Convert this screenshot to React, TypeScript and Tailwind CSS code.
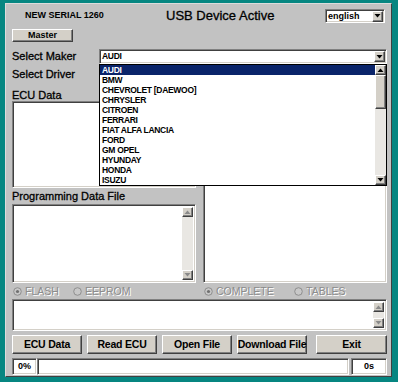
import React from "react";

const sunken =
  "border border-t-[#808080] border-l-[#808080] border-r-white border-b-white shadow-[inset_1px_1px_0_#404040,inset_-1px_-1px_0_#d4d0c8] bg-white";
const raised =
  "border border-t-white border-l-white border-r-[#404040] border-b-[#404040] shadow-[inset_-1px_-1px_0_#808080] bg-[#d4d0c8]";

function Arrow({ up, dim }: { up?: boolean; dim?: boolean }) {
  return (
    <svg width="7" height="4" viewBox="0 0 7 4" className="block">
      {up ? (
        <polygon points="0.5,4 6.5,4 3.5,0.5" fill={dim ? "#8a8a8a" : "#000"} />
      ) : (
        <polygon points="0.5,0 6.5,0 3.5,3.5" fill={dim ? "#8a8a8a" : "#000"} />
      )}
    </svg>
  );
}

function ArrowBtn({ up, dim, h = "h-[10px]" }: { up?: boolean; dim?: boolean; h?: string }) {
  return (
    <div className={`${raised} ${h} w-full flex items-center justify-center shrink-0`}>
      <Arrow up={up} dim={dim} />
    </div>
  );
}

function ScrollBar({ thumb, dim }: { thumb?: boolean; dim?: boolean }) {
  return (
    <div className="w-[11px] h-full flex flex-col bg-[#e9e7e3] shrink-0">
      <ArrowBtn up dim={dim} />
      {thumb ? <div className={`${raised} h-[34px] w-full shrink-0`} /> : null}
      <div className="flex-1" />
      <ArrowBtn dim={dim} />
    </div>
  );
}

function Combo({ text, cls, tcls }: { text: string; cls: string; tcls: string }) {
  return (
    <div className={`${sunken} ${cls} flex items-center pl-[2px] pr-[1px]`}>
      <span className={`flex-1 font-bold text-black leading-none ${tcls}`}>{text}</span>
      <div className="w-[11px] h-[11px]">
        <ArrowBtn h="h-[11px]" />
      </div>
    </div>
  );
}

function Radio({ label, on, w }: { label: string; on?: boolean; w: string }) {
  return (
    <div className={`${w} flex items-center gap-[3px] pl-[1px]`}>
      <svg width="9" height="9" viewBox="0 0 9 9">
        <circle cx="4.5" cy="4.5" r="3.8" fill="#c8c8c8" stroke="#8e8e8e" strokeWidth="1" />
        {on ? <circle cx="4.5" cy="4.5" r="1.6" fill="#707070" /> : null}
      </svg>
      <span className="text-[10.5px] text-[#8c8c8c] [text-shadow:1px_1px_0_#ffffff] leading-none">
        {label}
      </span>
    </div>
  );
}

function Button({ label, w }: { label: string; w: string }) {
  return (
    <div className={`${raised} ${w} h-full flex items-center justify-center text-[10.5px] font-bold text-black whitespace-nowrap tracking-[-0.2px]`}>
      {label}
    </div>
  );
}

const makers = [
  "AUDI",
  "BMW",
  "CHEVROLET [DAEWOO]",
  "CHRYSLER",
  "CITROEN",
  "FERRARI",
  "FIAT ALFA LANCIA",
  "FORD",
  "GM OPEL",
  "HYUNDAY",
  "HONDA",
  "ISUZU",
];

const listFont = "text-[8.5px] tracking-[-0.3px]";

export default function App() {
  return (
    <div className="w-[398px] h-[382px] bg-[#068681] pt-[3px] pl-[5px] pr-[6px] pb-[5px] font-['Liberation_Sans',Arial,sans-serif]">
      <div className="h-full flex flex-col bg-[#c2c2c2] border border-t-[#dcdcdc] border-l-[#dcdcdc] border-r-[#404040] border-b-[#404040] pl-[6px] pr-[4px]">
        {/* header */}
        <div className="mt-[5px] h-[14px] flex items-center">
          <div className="w-[154px] pl-[13px] text-[9px] font-bold text-black whitespace-nowrap">NEW SERIAL 1260</div>
          <div className="w-[159px] text-[13px] text-black whitespace-nowrap [-webkit-text-stroke:0.3px_#000]">USB Device Active</div>
          <Combo text="english" cls="w-[60px] h-[14px]" tcls="text-[9px]" />
        </div>
        {/* master */}
        <div className="mt-[6px] h-[13px] flex">
          <div className={`${raised} w-[61px] h-full flex items-center justify-center text-[9px] font-bold text-black`}>Master</div>
        </div>
        {/* select maker */}
        <div className="relative mt-[7px] h-[15px] flex items-center">
          <div className="w-[87px] text-[11px] text-black [-webkit-text-stroke:0.3px_#000] whitespace-nowrap">Select Maker</div>
          <Combo text="AUDI" cls="flex-1 h-[15px]" tcls={listFont} />
          <div className="absolute left-[87px] right-0 top-[15px] h-[122px] z-10 border border-black bg-white flex">
            <div className="flex-1 flex flex-col">
              {makers.map((m, i) => (
                <div
                  key={m}
                  className={`h-[10px] pl-[2px] flex items-center font-bold leading-none whitespace-nowrap ${listFont} ${
                    i === 0 ? "bg-[#0a246a] text-white" : "text-black"
                  }`}
                >
                  {m}
                </div>
              ))}
            </div>
            <ScrollBar thumb />
          </div>
        </div>
        {/* select driver */}
        <div className="mt-[3px] h-[15px] flex items-center">
          <div className="w-[87px] text-[11px] text-black [-webkit-text-stroke:0.3px_#000] whitespace-nowrap">Select Driver</div>
          <Combo text="" cls="flex-1 h-[15px]" tcls={listFont} />
        </div>
        {/* ECU data label */}
        <div className="mt-[7px] h-[12px] flex items-center text-[11px] text-black [-webkit-text-stroke:0.3px_#000]">ECU Data</div>
        {/* main area */}
        <div className="h-[182px] flex">
          <div className="w-[184px] flex flex-col">
            <div className={`${sunken} h-[87px] flex justify-end p-[2px]`}>
              <ScrollBar dim />
            </div>
            <div className="h-[16px] flex items-center text-[11px] text-black [-webkit-text-stroke:0.3px_#000] whitespace-nowrap">
              Programming Data File
            </div>
            <div className={`${sunken} h-[79px] flex justify-end p-[2px]`}>
              <ScrollBar dim />
            </div>
          </div>
          <div className={`${sunken} ml-[7px] flex-1 h-full`} />
        </div>
        {/* radios */}
        <div className="h-[16px] flex items-center">
          <Radio label="FLASH" on w="w-[60px]" />
          <Radio label="EEPROM" w="w-[131px]" />
          <Radio label="COMPLETE" on w="w-[90px]" />
          <Radio label="TABLES" w="w-[80px]" />
        </div>
        {/* status */}
        <div className={`${sunken} h-[32px] flex justify-end p-[2px]`}>
          <ScrollBar dim />
        </div>
        {/* buttons */}
        <div className="mt-[4px] h-[19px] flex">
          <Button label="ECU Data" w="w-[70px]" />
          <div className="w-[5px]" />
          <Button label="Read ECU" w="w-[70px]" />
          <div className="w-[5px]" />
          <Button label="Open File" w="w-[70px]" />
          <div className="w-[5px]" />
          <Button label="Download File" w="w-[70px]" />
          <div className="w-[9px]" />
          <Button label="Exit" w="flex-1" />
        </div>
        {/* progress */}
        <div className="mt-[4px] h-[17px] flex">
          <div className={`${sunken} w-[25px] h-full flex items-center justify-center text-[9px] font-bold text-black`}>0%</div>
          <div className={`${sunken} flex-1 h-full`} />
          <div className="w-[2px]" />
          <div className={`${sunken} w-[36px] h-full flex items-center justify-center text-[9px] font-bold text-black`}>0s</div>
        </div>
      </div>
    </div>
  );
}
